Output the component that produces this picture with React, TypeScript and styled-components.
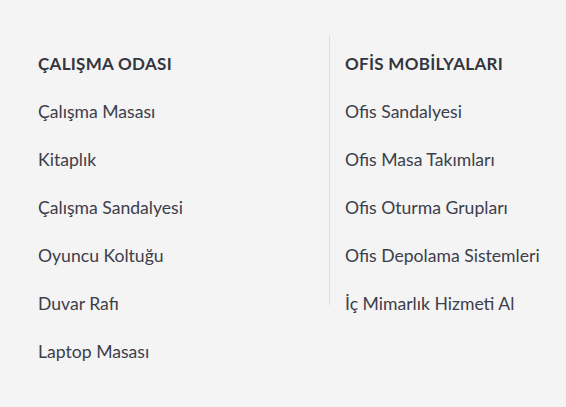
import React from 'react'
import styled, { createGlobalStyle } from 'styled-components'

const GlobalStyle = createGlobalStyle`
    html, body {
        margin: 0;
        padding: 0;
        background: #f4f4f4;
    }
    body {
        font-family: Lato, "Open Sans", "DejaVu Sans", sans-serif;
        color: #3c404a;
    }
`

const Wrapper = styled.div`
    width: 566px;
    height: 407px;
    box-sizing: border-box;
    padding: 36px 0 0 38px;
    display: grid;
    grid-template-columns: 291px 1fr;
    align-items: start;
`

const Column = styled.div<{ $divider?: boolean }>`
    display: flex;
    flex-direction: column;
    gap: 24px;
    padding-top: 16px;
    box-sizing: border-box;
    ${({ $divider }) => $divider && `
        border-left: 1px solid #dedede;
        padding-left: 15px;
        height: 269px;
    `}
`

const Heading = styled.h3`
    margin: 0;
    font-size: 17px;
    line-height: 24px;
    font-weight: 700;
    letter-spacing: 0.3px;
    color: #34363d;
    text-transform: uppercase;
`

const Item = styled.a`
    display: block;
    font-size: 17.6px;
    line-height: 24px;
    color: #3c404a;
    text-decoration: none;
    white-space: nowrap;
    cursor: pointer;
`

const columns = [
    {
        title: 'ÇALIŞMA ODASI',
        items: ['Çalışma Masası', 'Kitaplık', 'Çalışma Sandalyesi', 'Oyuncu Koltuğu', 'Duvar Rafı', 'Laptop Masası'],
    },
    {
        title: 'OFİS MOBİLYALARI',
        items: ['Ofis Sandalyesi', 'Ofis Masa Takımları', 'Ofis Oturma Grupları', 'Ofis Depolama Sistemleri', 'İç Mimarlık Hizmeti Al'],
    },
]

const App = () => {
    return (
        <>
            <GlobalStyle />
            <Wrapper>
                {columns.map((col, i) => (
                    <Column key={col.title} $divider={i > 0}>
                        <Heading>{col.title}</Heading>
                        {col.items.map((item) => (
                            <Item key={item}>{item}</Item>
                        ))}
                    </Column>
                ))}
            </Wrapper>
        </>
    )
}

export default App
